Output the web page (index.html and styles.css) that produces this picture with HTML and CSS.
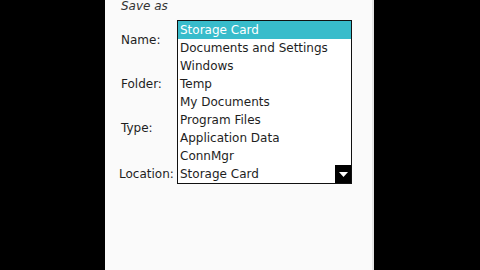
FILE: index.html
```html
<!DOCTYPE html>
<html lang="en">
<head>
    <meta charset="UTF-8">
    <title>Save as</title>
    <link rel="stylesheet" href="styles.css">
</head>
<body>
    <div class="screen">
        <div class="title">Save as</div>
        <div class="form">
            <div class="row">
                <span class="label">Name:</span>
                <span class="field"></span>
            </div>
            <div class="row">
                <span class="label">Folder:</span>
                <span class="field"></span>
            </div>
            <div class="row">
                <span class="label">Type:</span>
                <span class="field"></span>
            </div>
            <div class="row last">
                <span class="label wide">Location:</span>
                <div class="combo">
                    <span class="combo-text">Storage Card</span>
                    <span class="combo-btn">
                        <svg width="9" height="5" viewBox="0 0 9 5"><path d="M0 0h9L4.5 5z" fill="#fff"/></svg>
                    </span>
                    <!-- open dropdown list -->
                    <ul class="list">
                        <li class="selected">Storage Card</li>
                        <li>Documents and Settings</li>
                        <li>Windows</li>
                        <li>Temp</li>
                        <li>My Documents</li>
                        <li>Program Files</li>
                        <li>Application Data</li>
                        <li>ConnMgr</li>
                    </ul>
                </div>
            </div>
        </div>
    </div>
</body>
</html>
```

FILE: styles.css
```css
body, html {
    margin: 0;
    padding: 0;
    height: 100%;
    background: #000;
    font-family: "DejaVu Sans", sans-serif;
    font-size: 12px;
    color: #1e1e1e;
}

.screen {
    margin-left: 105px;
    width: 269px;
    height: 270px;
    background: #fafafa;
    border-right: 2px solid #e4e4e4;
    padding-left: 16px;
    box-sizing: border-box;
}

.title {
    height: 18px;
    line-height: 12px;
    font-style: italic;
    color: #333;
}

.row {
    display: flex;
    align-items: center;
    height: 44px;
}

.row.last {
    padding-top: 2px;
}

.label {
    width: 56px;
}

.label.wide {
    margin-left: -2px;
    width: 58px;
}

.combo {
    position: relative;
    display: flex;
    width: 175px;
    height: 20px;
    border: 1px solid #111;
    box-sizing: border-box;
    background: #fff;
}

.combo-text {
    flex: 1;
    line-height: 18px;
    padding-left: 2px;
}

.combo-btn {
    width: 16px;
    background: #000;
    display: flex;
    align-items: center;
    justify-content: center;
}

.list {
    position: absolute;
    left: -1px;
    right: -1px;
    bottom: 100%;
    margin: 0;
    padding: 0;
    list-style: none;
    background: #fff;
    border: 1px solid #111;
    border-bottom: none;
}

.list li {
    height: 18px;
    line-height: 18px;
    padding-left: 2px;
}

.list li.selected {
    background: #38bccb;
    color: #fff;
}
```
